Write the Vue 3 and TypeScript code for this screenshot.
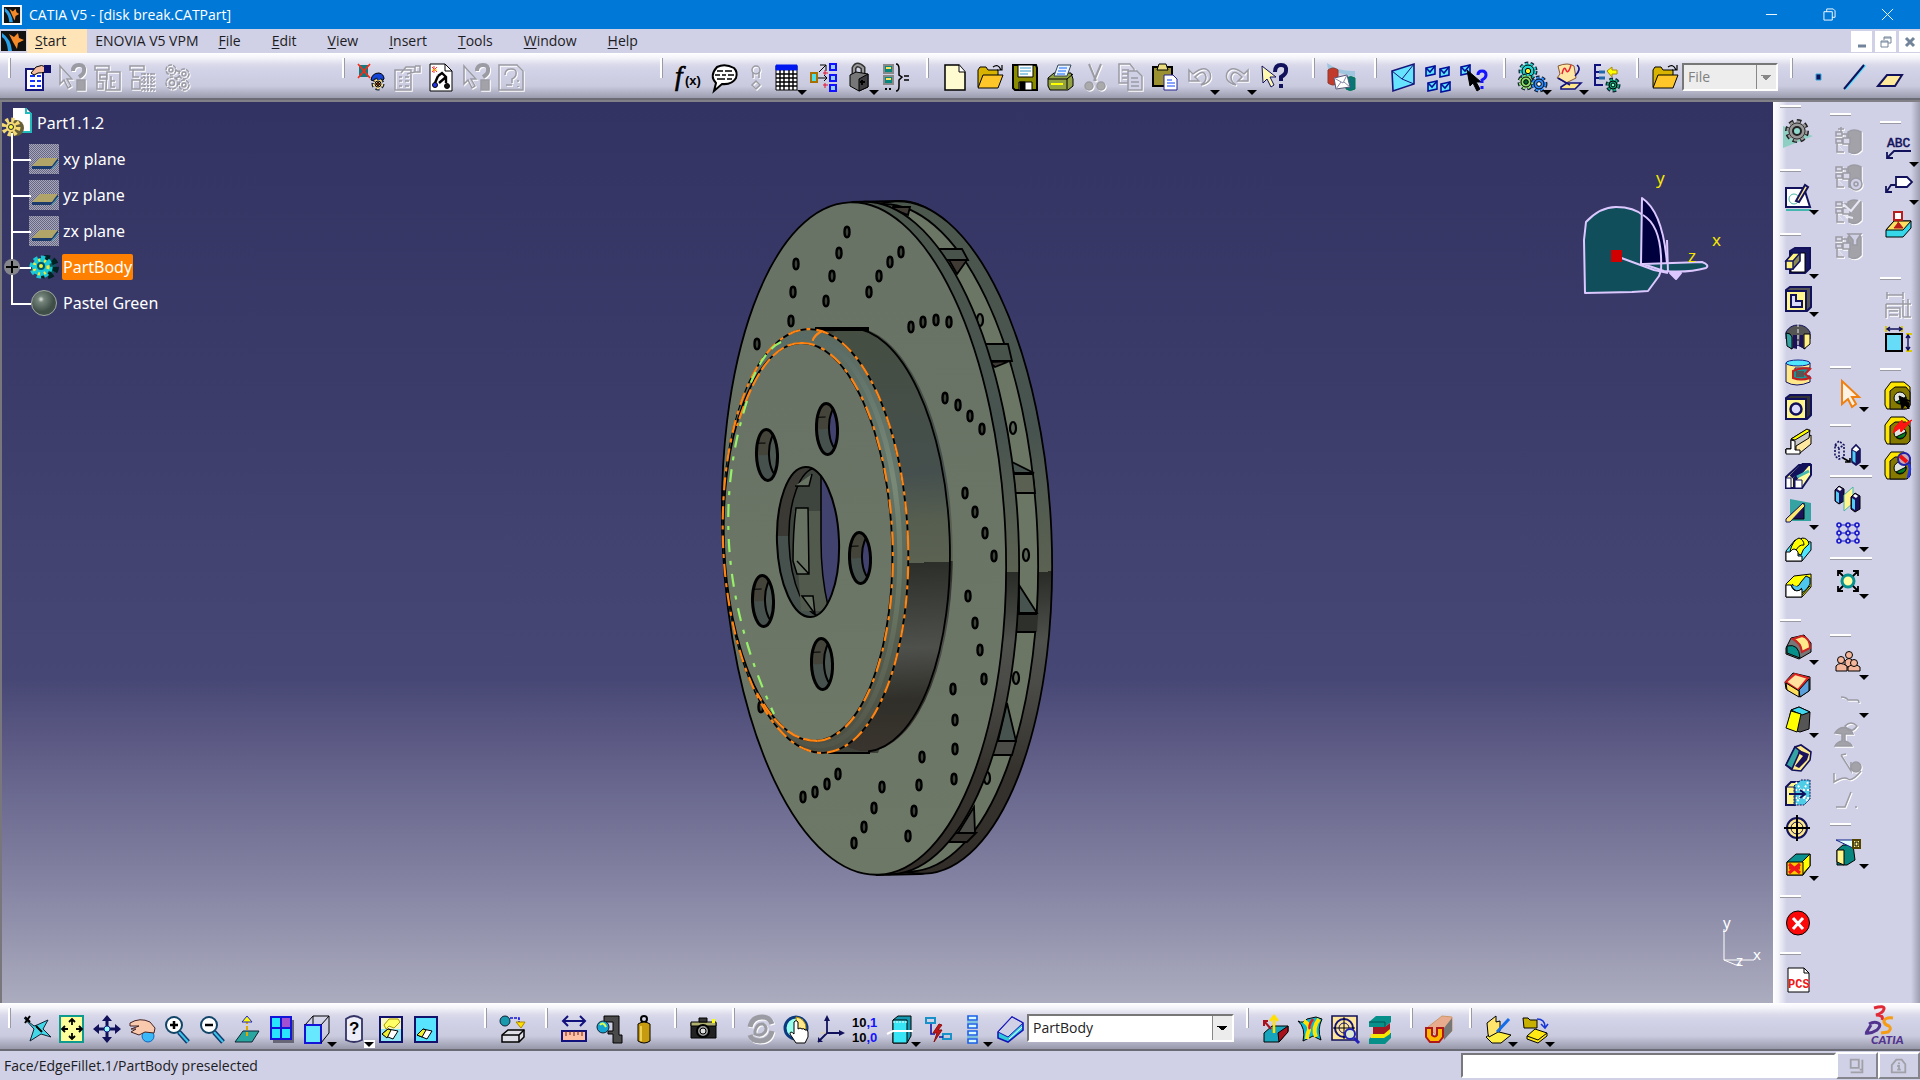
<script setup lang="ts">
interface Tool { icon: string; label: string; menu?: boolean; off?: boolean; narrow?: boolean; boxed?: boolean }
interface Group { size: number; tools: Tool[]; select?: string; rule?: boolean }

const t = (icon: string, label: string, flags = ''): Tool => ({
  icon, label,
  menu: flags.includes('m'), off: flags.includes('o'), narrow: flags.includes('n'), boxed: flags.includes('b'),
})

const gear = (cx: number, cy: number, r: number, fill: string, hub: string) =>
  `<circle cx="${cx}" cy="${cy}" r="${r}" fill="none" stroke="#123" stroke-width="5" stroke-dasharray="3 2"/><circle cx="${cx}" cy="${cy}" r="${r}" fill="${fill}" stroke="${fill}" stroke-width="2.5" stroke-dasharray="2.4 2.6"/><circle cx="${cx}" cy="${cy}" r="${r - 1}" fill="${fill}"/><circle cx="${cx}" cy="${cy}" r="${r / 2.6}" fill="${hub}"/>`
const folder = '<path d="M3 25V8l2-3h6l2 3h10v5" fill="#d8b400"/><path d="M3 26l5-13h20l-5 13z" fill="#ffc62a"/><path d="M18 5q5-4 8 3m-4 0h5V3" stroke-width="1.2"/>'
const nut = '<path d="M2 9l6-8h13l6 5v18l-5 4H4l-2-4z" fill="#ffe600"/><path d="M7 10l5-4h11l4 5v14l-3 3H7z" fill="#857900"/><circle cx="17" cy="17" r="6" fill="#dfe3df"/><path d="M13 21a6 6 0 0 0 10-5z" fill="#067a1f"/>'
const tree = '<path d="M15 6q6-4 13 0v18q-6 6-12 2V16h-1z" fill="#a2a2a8"/><path d="M3 6h6v4H3zM3 13h6v4H3zM10 12h7v6h-7zM4 17v9h7M9 8h5v4" fill="#d8d8ea"/>'
const mail = (x: number, y: number) => `<path d="M${x} ${y + 2}l9-2v8l-9 2z" fill="#5fe3ff" stroke="#00109a" stroke-width="1.6"/><path d="M${x} ${y + 2}l4 4 5-6" stroke="#00109a" stroke-width="1.6"/>`
const help = '<path d="M3 4l1 17 4-4 4 8 3-2-4-8h6z" fill="#fff9b0" stroke="#101060"/><path d="M16 10q0-7 6-7t5 6q0 3-5 6v4M22 22v4" stroke="#12125c" stroke-width="4"/>'
const offHelp = '<path d="M3 4v18l4-4 4 8 3-2-4-7h5z"/><path d="M16 9q0-6 6-6t5 6q0 3-5 6" stroke-width="4"/><path d="M20 18h8v10h-8z" fill="#a2a2a8"/>'
const card = '<rect x="4" y="7" width="17" height="21" fill="#fff" stroke="#14147a" stroke-width="2"/><path d="M8 14h5m2 0h4m-11 5h5m2 0h4m-11 5h5m2 0h4" stroke="#1535ff" stroke-width="2"/><path d="M9 11l5-6q6-3 10 0v5q-5 1-8 1l-4 2z" fill="#f7bda0"/><path d="M22 3h7v8h-7z" fill="#10106a" stroke="none"/>'
const offCard = '<path d="M4 8h16v20H4zM8 15h3m3 0h4m-10 4h3m3 0h4m-10 5h3m3 0h4M10 11l5-6h9v5l-8 2M24 4h5v6h-5"/>'

const icons: Record<string, string> = {
  card, offCard, offHelp, help, folder,
  offTree: '<path d="M3 4h14v4H3zM5 8v18M8 13h7v4H8zM5 20h6v7H5zM15 10h13v18H14zM19 14v11h4M19 19h4"/>',
  offGrid: '<path d="M3 4h14v4H3zM6 8v7h6M5 18h8v9H5z"/><path d="M14 12h15M14 16h15M14 20h15M14 24h15M14 28h15M17 11v17M21 11v17M25 11v17" stroke-dasharray="2 1"/>',
  offGears: '<g stroke-dasharray="4 1"><circle cx="9" cy="8" r="5"/><circle cx="22" cy="12" r="5"/><circle cx="10" cy="21" r="6"/><circle cx="22" cy="23" r="5"/></g><circle cx="9" cy="8" r="2"/><circle cx="22" cy="12" r="2"/><circle cx="10" cy="21" r="2.5"/><circle cx="22" cy="23" r="2"/><path d="M13 8l5 2M13 17l5-3M16 22h2"/>',
  worker: '<path d="M3 3h9v12H3z" fill="#157a80" stroke="none"/><path d="M2 2l12 14M14 2L2 16" stroke="#ff2a12" stroke-width="1.6"/><path d="M15 18q1-7 8-7 5 1 5 6l-5 4z" fill="#1544d8"/>' + gear(22, 22, 4, '#ffe08a', '#8a2a00'),
  graph: '<path d="M4 2h15l7 7v20H4z" fill="#fff"/><path d="M19 2v7h7" /><path d="M12 14l4-3 4 4v6M12 14l-3 7M20 15l-7 6" stroke-width="2.4"/><circle cx="9" cy="23" r="2.5" fill="#2536e8"/><circle cx="21" cy="24" r="2.5" fill="#111"/><path d="M6 5l5 5m0-5l-5 5M8 4v7" stroke="#f33"/><path d="M6 8h5" stroke="#fc0"/>',
  offPage: '<path d="M3 3h18l6 6v19H3zM9 13q0-6 6-6t5 5q0 3-4 5v4M10 23h6M22 18v2m0 4v1"/>',
  fx: '<text x="1" y="23" font-family="Liberation Serif" font-style="italic" font-size="27" fill="#000" stroke="#000" stroke-width=".7">f</text><text x="11" y="23" font-family="Liberation Sans" font-weight="bold" font-size="13" fill="#000" stroke="none">(x)</text>',
  bubble: '<path d="M8 5q8-4 17 1 4 4 2 10-4 7-14 6l-8 7 2-8q-7-7 1-16z" fill="#fff" stroke-width="2"/><path d="M8 9h6m2 0h7M6 13h5m2 0h4m2 0h6M8 17h8m2 0h5" stroke-width="1.6"/>',
  offLink: '<circle cx="15" cy="8" r="4"/><path d="M12 10v6m6-6v6m-3 3l4 4-4 4-4-4z"/>',
  table: '<path d="M4 4h21v24H4z" fill="#fff"/><path d="M4 3h21v5H4z" fill="#0018f0" stroke="#0018f0"/><path d="M4 12h21M4 16h21M4 20h21M4 24h21M8 8v20M12 8v20M17 8v20M21 8v20" stroke-width="1.4"/>',
  relate: '<path d="M2 11h6v9H2z" fill="#4de0e8" stroke="#a87000" stroke-width="2"/><path d="M10 10l7-7m-6 0h6v6M9 16h9m-3-3l3 3-3 3"/><path d="M21 2h6v6h-6zM21 13h6v6h-6zM21 23h6v6h-6z" fill="#9cf" stroke="#1212ff" stroke-width="2"/><path d="M16 8v5m-2-2h5M16 21v5m-2-3h5" stroke="#e01030"/>',
  lock: '<path d="M10 13V6q3-6 9 0v6" stroke="#333" stroke-width="5"/><path d="M10 13V6q3-6 9 0v6" stroke="#999" stroke-width="2"/><path d="M6 13l6-3 12 2v13l-9 4-9-5z" fill="#777"/><path d="M15 17l9-5v13l-9 4z" fill="#3c3c40"/><path d="M18 18v5m-2-3h5" stroke="#000" stroke-width="2"/>',
  equiv: '<path d="M3 3h9v8H3zM3 14h9v8H3z" fill="#07857f" stroke="#888" stroke-width="2"/><path d="M5 5h5v2H5zM5 16h5v2H5z" fill="#ffe45c" stroke="none"/><path d="M15 2q3 0 3 5v6l3 2-3 3v6q0 5-3 5M23 14h5m-5 4h5" stroke-width="1.5"/><path d="M4 27h2m2 0h2" stroke-width="2"/>',
  page: '<path d="M5 3h14l6 7v18H5z" fill="#fffbd0" stroke-width="1.5"/><path d="M19 3v7h6" fill="#fff"/>',
  save: '<path d="M3 3h23l1 3v22H5l-2-2z" fill="#8b8b00" stroke-width="2"/><path d="M8 3h15v12H8z" fill="#fff"/><path d="M10 6h11m-11 3h11m-11 3h8" stroke="#39c"/><path d="M9 20h13v8H9z" fill="#fff"/><path d="M10 20h5v8h-5z" fill="#000"/>',
  print: '<path d="M3 16l6-5h17l2 6v7l-5 4H5l-2-4z" fill="#93a344"/><path d="M3 17h19l6-5M22 17v10"/><path d="M9 14l4-11h13l-4 11z" fill="#e9f3ff" stroke="#345"/><path d="M14 6h8m-9 3h8m-9 3h8" stroke="#16f"/><path d="M6 22h12" stroke="#ff0" stroke-width="2"/>',
  cut: '<path d="M9 2l7 17M21 2l-7 17" stroke-width="2"/><circle cx="9" cy="24" r="4" fill="#aaa"/><circle cx="21" cy="24" r="4" fill="#aaa"/>',
  copy: '<path d="M4 2h11l4 5v14H4zM7 8h7m-7 4h7m-7 4h5"/><path d="M13 9h9l5 5v14H13zM16 16h7m-7 4h8m-8 4h8" fill="#d0d0e6"/>',
  paste: '<path d="M3 5h19v19H3z" fill="#9b9132" stroke-width="2"/><path d="M7 8l2-6h7l2 6z" fill="#e8dc7e"/><path d="M14 13h9l4 4v11H14z" fill="#fff" stroke="#22228f"/><path d="M17 18h5m-5 3h8m-8 3h8" stroke="#14f"/>',
  undo: '<path d="M4 8v11h10l-4-4q9-9 11 0 0 5-5 8 12-3 9-12-5-9-17 1z"/>',
  redo: '<path d="M26 8v11H16l4-4q-9-9-11 0 0 5 5 8-12-3-9-12 5-9 17 1z"/>',
  send: '<path d="M1 1q12 9 28 8v6L2 8z" fill="#9fc6de" stroke="none"/><path d="M2 8q5-4 10 0v13q-5 4-10 0z" fill="#c23a2c" stroke="#8a3a30"/><path d="M20 16q5-3 9 0v11q-5 3-9 0z" fill="#0b7477" stroke="#075"/><path d="M8 16l13-3 3 12-14 2z" fill="#fff" stroke="#557"/><path d="M8 16l9 5 4-8M10 27l5-7m9 5l-6-5" stroke="#88a"/>',
  mail: '<path d="M4 9L26 2v20L5 29z" fill="#66e4ff" stroke="#15157c" stroke-width="1.6"/><path d="M4 9l10 8L26 2M14 17l12 5" stroke="#15157c"/>',
  mails: mail(3, 4) + mail(17, 5) + mail(5, 19) + mail(18, 20),
  mailHelp: mail(3, 3) + '<path d="M9 8l3 16 3-3 4 8 3-2-4-7h5z" fill="#000"/><path d="M20 13q0-4 4-4t4 4q0 3-4 5v3M24 24v3" stroke="#1414ff" stroke-width="3"/>',
  gears: gear(11, 9, 7, '#20d5d0', '#ffef30') + gear(9, 20, 6, '#8fe070', '#063') + gear(22, 22, 6, '#2e8dff', '#fff'),
  scroll: '<path d="M4 4q10-4 16 0l2 12-10 5-9-5 3-4z" fill="#ffe6a4" stroke="#853"/><path d="M8 12q2-9 4-4t5-5" stroke="#e23" stroke-width="1.5"/><path d="M7 25l6-4h14l-6 6H7z" fill="#ffe88a" stroke="#12127c" stroke-width="1.6"/><path d="M4 16l12 7m7-20q5 4-2 11" stroke="#12127c" stroke-width="1.6"/>',
  treeGear: '<path d="M3 3h7M4 3v20h8M4 10h9M4 16h9" stroke="#12127c" stroke-width="2"/><path d="M8 10h6m-6 6h6" stroke="#26a" stroke-width="3"/><path d="M16 9l5-4v3h5v4h-5v3z" fill="#ff0" stroke="#a80"/>' + gear(22, 23, 5, '#11a078', '#8fc'),
  point: '<path d="M12 12h5v6h-5z" fill="#12125c" stroke="#3ad"/>',
  line: '<path d="M6 27L26 3" stroke="#57e0ff" stroke-width="3"/><path d="M5 27L25 3" stroke="#12125c" stroke-width="2"/>',
  plane: '<path d="M4 24l9-11h15l-7 11z" fill="#ffe99a" stroke="#12125c" stroke-width="2"/>',
  cog: '<path d="M0 8v22l30-12z" fill="#8fcfc3" stroke="none"/><circle cx="14" cy="13" r="9" stroke="#222" stroke-width="6" stroke-dasharray="4 3"/><circle cx="14" cy="13" r="9" fill="#999" stroke="#999" stroke-width="3" stroke-dasharray="3 4"/><circle cx="14" cy="13" r="8" fill="#999" stroke="#333"/><circle cx="14" cy="13" r="4" fill="#8fd8cc" stroke="#222" stroke-width="2"/>',
  sketch: '<path d="M3 6h18l6 19H3z" fill="#fff" stroke="#12125c" stroke-width="2"/><circle cx="11" cy="17" r="5" stroke="#4db7a5"/><path d="M13 19L22 3l3 2-9 15z" fill="#ffe98a" stroke="#12125c" stroke-width="2"/><path d="M3 28h25" stroke="#46b6b0" stroke-width="2"/>',
  pad: '<path d="M7 5l5-3h15v20l-5 5H7z" fill="#181862" stroke="#12125c" stroke-width="2"/><path d="M8 7h14v19H8z" fill="#fff"/><path d="M3 15l7-8h7v8l-7 8H3z" fill="#8a8a50" stroke="#12125c" stroke-width="1.6"/><path d="M3 15l7-8h7l-7 8zM3 15h7v8H3z" fill="#fff37d" stroke="#12125c" stroke-width="1.4"/>',
  pocket: '<path d="M3 6l4-3h21v20l-4 4H3z" fill="#555" stroke="#12125c" stroke-width="2"/><path d="M3 7h20v20H3z" fill="#fff68c" stroke="#12125c" stroke-width="2"/><path d="M8 11h5v6h6v6H8z" fill="#dadafa" stroke="#12125c" stroke-width="2"/>',
  shaft: '<path d="M3 10q4-7 12-7t12 7v7h-5v10l-7-4-7 4v-10H3z" fill="#555" stroke="#12125c"/><path d="M3 11q5 0 6 4v12l-5-3z" fill="#35a3a2"/><path d="M21 12h6v10l-6 5z" fill="#ffef87"/><path d="M10 13h4v14l-4-1zM17 13h3v13l-4-2z" fill="#1c125c" stroke="none"/><path d="M15 1v27" stroke="#eee" stroke-dasharray="4 2"/>',
  groove: '<path d="M3 6v19q10 6 24 0v-6H12v-8h15V6z" fill="#ffe88a" stroke="#12125c"/><ellipse cx="15" cy="6" rx="12" ry="3" fill="#4fe6ff" stroke="#128"/><path d="M27 12q-9-2-17 2v7q8 3 17 0l-5-4z" fill="#16989a" stroke="#c12020" stroke-width="2"/><path d="M13 14h8v6h-8z" fill="#555" stroke="none"/>',
  hole: '<path d="M3 6l4-3h21v20l-4 4H3z" fill="#333" stroke="#12125c" stroke-width="2"/><path d="M3 7h20v20H3z" fill="#fff68c" stroke="#12125c" stroke-width="2"/><circle cx="13" cy="17" r="5.5" fill="#dadafa" stroke="#12125c" stroke-width="2.5"/>',
  rib: '<path d="M3 26h14l11-9V8L12 17l-1 5H3z" fill="#ffe9a0"/><path d="M8 12L23 3h4l-1 8-13 8v7H3v-4h5z" fill="#c8c8c8"/><path d="M8 12L24 2l3 2-15 9z" fill="#ff0"/><path d="M3 22h5v-9l4 1v9h5v4H3z" fill="#fff"/>',
  slot: '<path d="M3 15L16 3h12v10L19 26H3z" fill="#fff9a0" stroke="#12125c" stroke-width="2"/><path d="M8 15L20 3h4L12 17v9" stroke="#12125c" stroke-width="4"/><path d="M14 15l12-6" stroke="#46b6b0" stroke-width="3"/><path d="M3 16h5v10H3zm9 2h7v8h-7z" fill="#fff" stroke="#12125c"/>',
  stiff: '<path d="M7 2l21 4v18H7z" fill="#35a3a2" stroke="none"/><path d="M3 22L21 6v16H9z" fill="#1c125c"/><path d="M3 22L20 6l2 3L7 25H3z" fill="#ffe96e" stroke="#12125c"/>',
  multi: '<path d="M3 16L12 5l16 2v8l-9 11H3z" fill="#4fe6ff"/><path d="M11 17q1-9 8-14 6 0 7 6-7 5-8 11z" fill="#ff0"/><path d="M7 16q3-11 9-13 5 2 5 7-6-1-9 8z" fill="#ff0"/><path d="M3 17h4q4-6 8 0v4h4v5H3z" fill="#fff"/>',
  removed: '<path d="M3 14l8-8 17-2v13l-9 10H3z" fill="#ff0"/><path d="M9 14q5 6 9-2l5-6 4 2v6q-5 10-14 10z" fill="#4fc6ee"/><path d="M18 26l9-10" stroke="#000"/><path d="M3 15h5q2 9 11 4v8H3z" fill="#fff"/><path d="M8 15q5 10 11 3" fill="#4fc6ee"/>',
  fillet: '<path d="M3 16L8 6 21 3l7 8v9l-12 7L3 22z" fill="#777"/><path d="M10 7l9-3q8 2 8 12l-8 4q-1-9-9-13z" fill="#ffe98a" stroke="#c22" stroke-width="2"/><path d="M4 14q12-3 13 12L4 21z" fill="#07908a"/>',
  chamfer: '<path d="M2 12l8-9 17 4v13l-10 7-14-8z" fill="#777"/><path d="M3 12l9-8 13 4-10 12z" fill="#ffe2a0" stroke="#d22" stroke-width="2"/><path d="M16 20l10-11v12l-9 6z" fill="#5ba0da"/><path d="M3 13l13 8v6L4 20z" fill="#ffe05c"/>',
  draft: '<path d="M8 5l8-3 11 5-1 17-9 3-13-4z" fill="#555"/><path d="M8 5l8-3 11 5-8 3z" fill="#42d6ee"/><path d="M8 6l10 3-4 18-11-4z" fill="#ff0"/>',
  shell: '<path d="M3 22L12 4l6-2 10 7-1 8-9 11-9-1z" fill="#ffe98a" stroke="#12125c" stroke-width="1.6"/><path d="M3 22L12 4l5 4-8 18z" fill="#35a3a2" stroke="#12125c" stroke-width="1.6"/><path d="M16 7l10 4-2 6-8 8-4-2 8-10-5-3z" fill="#1c125c" stroke="none"/>',
  thick: '<path d="M3 9l5-5h10v18l-6 5H3z" fill="#fff68c" stroke="#12125c" stroke-width="2"/><path d="M11 8l7-6h9v19l-6 6H11z" fill="#4fcde6" stroke="#12125c" stroke-dasharray="2 1"/><path d="M13 4l12 20M25 4L13 26M12 12h14M12 20h14" stroke="#fff" stroke-dasharray="2 2" stroke-width="2"/><path d="M3 9h9v18" stroke="#12125c"/><path d="M6 16h15m-4-4l5 4-5 4" stroke="#12125c" stroke-width="2"/>',
  target: '<circle cx="14" cy="15" r="10" fill="#ffe98a" stroke="#12125c" stroke-width="2"/><circle cx="14" cy="15" r="6" stroke="#12125c"/><path d="M14 2v26M1 15h26" stroke="#000" stroke-width="2"/>',
  remove: '<path d="M4 14L13 6h14v12l-7 9H4z" fill="#0b9090"/><path d="M19 14l8-8v12l-8 9z" fill="#ff0"/><path d="M4 14h16v13H4z" fill="#ffc800"/><path d="M6 16l11 9m0-9L6 25M6 20h11" stroke="#f01818" stroke-width="3"/>',
  stop: '<ellipse cx="15" cy="15" rx="11.5" ry="12" fill="#fb0808"/><path d="M10 10l10 11m0-11L10 21" stroke="#fff" stroke-width="3"/>',
  pcs: '<path d="M5 3h16l5 5v19H5z" fill="#fff"/><path d="M21 3v5h5"/><text x="5" y="23" font-family="Liberation Mono" font-size="12" font-weight="bold" fill="#f01818" stroke="none">PCS</text>',
  offA: tree + '<path d="M8 1v5M5 3h6"/>',
  offB: tree + '<circle cx="23" cy="23" r="6" fill="#d0d0e6"/><circle cx="23" cy="23" r="2"/>',
  offC: tree + '<path d="M10 8l8 7 9-11M12 20l8 2" stroke="#e8e8f4" stroke-width="2"/>',
  offD: tree + '<path d="M15 3h13l-4 6v5h-4V9z" fill="#d0d0e6"/>',
  cursor: '<path d="M9 2v23l6-5 4 8 4-3-4-7h7z" fill="#fff3e6" stroke="#f08010" stroke-width="2"/>',
  transform: '<path d="M2 8l4-4 5 4v12l-5 2-4-3zM2 8l4 3 5-3M6 11v10" stroke="#12125c" stroke-dasharray="2 1.5" stroke-width="1.6"/><path d="M10 21l7 4m-5 0h5v-4" stroke-width="1.6"/><path d="M19 12l4-4 4 4v13l-4 3-4-3z" fill="#fff" stroke="#12125c" stroke-width="1.6"/><path d="M19 13l4 2v12l-4-3z" fill="#4fcdf6" stroke="#12125c"/><path d="M23 15l4-3v13l-4 3z" fill="#1c125c" stroke="none"/>',
  mirror: '<path d="M2 6l4-4 5 3v12l-5 3-4-3z" fill="#1c125c"/><path d="M3 7l3 2v10l-3-2z" fill="#4fcdf6" stroke="none"/><path d="M4 5l2-2 3 2-2 2z" fill="#fff" stroke="none"/><path d="M11 11l9-8v16l-9 8z" fill="#fff58c" stroke="#46b6b0"/><path d="M18 13l4-4 5 3v13l-5 3-4-3z" fill="#1c125c"/><path d="M19 14l3 2v10l-3-2z" fill="#4fcdf6" stroke="none"/><path d="M20 12l2-2 3 2-2 2z" fill="#fff" stroke="none"/>',
  grid: '<path d="M6 6h18M6 14h18M6 22h18M6 6v16M15 6v16M24 6v16" stroke="#1616c8"/><g fill="#d0d0e6" stroke="#1616c8" stroke-width="1.6"><circle cx="6" cy="6" r="2"/><circle cx="15" cy="6" r="2"/><circle cx="24" cy="6" r="2"/><circle cx="6" cy="14" r="2"/><circle cx="15" cy="14" r="2"/><circle cx="24" cy="14" r="2"/><circle cx="6" cy="22" r="2"/><circle cx="15" cy="22" r="2"/><circle cx="24" cy="22" r="2"/></g>',
  scale: '<circle cx="15" cy="15" r="6" fill="#ffffa0" stroke="#079090" stroke-width="3"/><path d="M10 10L5 5m0 5V5h5M20 10l5-5m-5 0h5v5M10 20l-5 5m0-5v5h5M20 20l5 5m-5 0h5v-5" stroke-width="1.8"/>',
  people: '<g fill="#f5b79b"><path d="M12 20v-6q4-5 8 0v6z"/><circle cx="16" cy="8" r="3.5"/><path d="M3 24v-5q4-5 11 0v5z"/><circle cx="8" cy="13" r="3.5"/><path d="M15 24v-4q6-5 12 0v4z"/><circle cx="21" cy="16" r="3.5"/></g>',
  curve: '<path d="M8 12q5 0 7 3h9q2 0 2 3"/>',
  umbrella: '<path d="M2 12q6-9 16-3l2 4h-8v7q6 2 7 5H2q2-4 7-5v-7z" fill="#a2a2a8"/><path d="M12 5q6-6 12 0-4 6-9 4z"/>',
  sweep: '<path d="M8 2l10 16V9M8 2l5-1M1 20v9q10-6 14-3t13-8"/><circle cx="23" cy="14" r="5" fill="#a2a2a8"/>',
  angle: '<path d="M18 7l-6 15H3m19 0h2"/>',
  cube: '<path d="M4 14l6-5h10l2 15-8 5H4z" fill="#07857f"/><path d="M4 14h7v15l-7-3z" fill="#fff68c"/><path d="M3 4h18l-1 8z" fill="#e4ffff" stroke="#128"/><path d="M20 4h7v8h-7z" fill="#fff68c" stroke="#554400" stroke-width="2"/><path d="M22 6h3v4h-3z" stroke="#000"/>',
  abc: '<text x="4" y="13" font-family="Liberation Mono" font-size="13" fill="#12125c" stroke="#12125c" stroke-width=".5">ABC</text><path d="M28 17H11l-6 6m-1-5v6h6" stroke="#12125c" stroke-width="1.8"/>',
  flag: '<path d="M13 5h11l5 5-5 5H13z" fill="#fff" stroke="#12125c" stroke-width="1.8"/><path d="M13 13H8l-4 6m-1-5v6h6" stroke="#12125c" stroke-width="1.8"/>',
  datum: '<path d="M3 20l8-9h17v7l-8 9H3z" fill="#35d7e8"/><path d="M3 20l8-9h17l-8 9z" fill="#ffdf60"/><path d="M11 2h8v8h-8z" fill="#fff" stroke="#b81c1c" stroke-width="2"/><path d="M15 10v3l-4 5h9l-4-5" fill="#b81c1c" stroke="#b81c1c"/>',
  offDim: '<path d="M4 2v7M20 2v7M4 5h16M3 14h25M3 14v14M3 18h14v10M6 21h9M6 25h9M25 9v18M20 10v17M20 27h8"/>',
  dim: '<path d="M3 9h16v17H3z" fill="#66dcf8" stroke-width="2"/><path d="M3 1v6M19 1v6M23 9h6M23 26h6" stroke="#dbc800" stroke-width="2"/><path d="M4 4h15m-12-2L4 4l3 2m9-4l3 2-3 2M25 10v15m-2-12l2-3 2 3m-4 9l2 3 2-3" stroke="#12125c" stroke-width="1.4"/>',
  nutA: nut + '<path d="M16 15l3 13 3-4 4 4v-6l-3-2h4z" fill="#000"/>',
  nutB: nut + '<path d="M12 11l7-7 1 4 9-4-11 12-1-4-7 5z" fill="#ff1414" stroke="#f11"/>',
  nutC: nut + '<circle cx="21" cy="8" r="6" fill="#c8a8b8" stroke="#2222a8" stroke-width="2"/><path d="M17 5l7 6" stroke="#e11" stroke-width="4"/><path d="M26 13l1 5-2 9" stroke="#2233ee" stroke-width="2.5"/>',
  fly: '<path d="M2 4l10 8 3-1 11-5-5 9 8 8-10-3-11 7 4-12z" fill="#43d8e8" stroke="#123"/><path d="M3 3l5 5M8 2L3 9M14 12l6 6" stroke-width="2"/>',
  fit: '<path d="M3 2h23v26H3z" fill="#ffff9c" stroke="#0f9a90" stroke-width="2"/><path d="M15 11V5m-3 3l3-3 3 3M15 19v6m-3-3l3 3 3-3M11 15H5m3-3l-3 3 3 3M19 15h6m-3-3l3 3-3 3" stroke-width="1.8"/>',
  pan: '<path d="M15 3v24M3 15h24" stroke="#12125c" stroke-width="3"/><path d="M10 7l5-6 5 6zM10 23l5 6 5-6zM7 10l-6 5 6 5zM23 10l6 5-6 5z" fill="#12125c" stroke="none"/><circle cx="15" cy="15" r="3" fill="#9ff" stroke="#128"/>',
  rotate: '<circle cx="21" cy="22" r="6" fill="#39b9f8" stroke="#16b"/><path d="M3 9q10-6 20-1l5 6-1 5-9-1-6 3-8-3 5-3H4l8-3H3z" fill="#f9c9ae" stroke="#422"/>',
  zoomIn: '<path d="M17 18l9 10" stroke="#123a70" stroke-width="5"/><path d="M17 18l9 10" stroke="#3cc4e8" stroke-width="2"/><circle cx="12" cy="11" r="8" fill="#fff" stroke="#146" stroke-width="2"/><path d="M8 11h8m-4-4v8" stroke-width="2.5"/>',
  zoomOut: '<path d="M17 18l9 10" stroke="#123a70" stroke-width="5"/><path d="M17 18l9 10" stroke="#3cc4e8" stroke-width="2"/><circle cx="12" cy="11" r="8" fill="#fff" stroke="#146" stroke-width="2"/><path d="M8 11h8" stroke-width="2.5"/>',
  normal: '<path d="M3 28l8-11h16l-7 11z" fill="#2aa6a0" stroke="#123"/><path d="M15 22V6" stroke="#e0a800" stroke-width="2" stroke-dasharray="4 2"/><path d="M10 8l5-6 5 6z" fill="#ff0" stroke="#22c"/>',
  quad: '<path d="M6 6h21v23H6z" fill="#667" stroke="none"/><path d="M4 3h20v22H4z" fill="#28e4ff" stroke="#1414d8" stroke-width="2"/><path d="M14 3v22M4 14h20" stroke="#1414d8" stroke-width="2"/><path d="M15 4h8v9h-8z" fill="#a050d0" stroke="none"/>',
  iso: '<path d="M3 11h16v18H3z" fill="#68e8ff" stroke="#1414d8" stroke-width="2"/><path d="M3 11L11 2h16v17l-8 10M19 11l8-9M11 2v8"/>',
  hidden: '<path d="M7 5q8-6 16 0v21q-8 4-16 0z" fill="#eeeef8" stroke="#336" stroke-width="1.8"/><text x="10" y="20" font-family="Liberation Sans" font-size="17" font-weight="bold" fill="#000" stroke="none">?</text>',
  swapA: '<path d="M4 3h22v25H4z" fill="#f6f6c0" stroke="#12126c" stroke-width="2"/><path d="M5 15h20v12H5z" fill="#8fe6f4" stroke="none"/><path d="M8 11l5-6h9l2 3-6 6-5-2-3 3z" fill="#ff6" stroke="#a90"/><path d="M6 20l6-5 10 2-5 8-5-2z" fill="#fff"/><path d="M6 20l6-5 3 1-4 8z" fill="#ee3"/>',
  swapB: '<path d="M4 3h22v25H4z" fill="#58e3ff" stroke="#12126c" stroke-width="2"/><path d="M6 21l6-6 9 2-5 8-5-2z" fill="#fff"/><path d="M6 21l6-6 3 1-4 7z" fill="#ee3"/>',
  place: '<circle cx="7" cy="7" r="5" fill="#1899ad" stroke="#123"/><path d="M12 4h9v7" stroke="#1414d8" stroke-width="1.6" stroke-dasharray="3 1"/><path d="M18 8h9l-4 6z" fill="#ffe000" stroke="#a80"/><path d="M4 21l6-5h16v7l-5 5H4z" fill="#dedee6" stroke-width="1.5"/><path d="M4 21h17v7m0-7l5-5" stroke-width="1.5"/>',
  measure: '<path d="M4 7h22M9 2L4 7l5 5M21 2l5 5-5 5" stroke="#12127c" stroke-width="2"/><path d="M3 17h24v10H3z" fill="#ffc0a4" stroke="#12127c" stroke-width="2"/><path d="M7 17v5m4-5v4m4-4v5m4-5v4m4-4v5" stroke="#622"/>',
  caliper: '<path d="M10 2h15v19h3v8h-9v-9h-5v-3h5V8h-9z" fill="#4a4a4a"/><circle cx="9" cy="13" r="6" fill="#16a5d0" stroke="#123"/><path d="M6 11q3-4 6 2" stroke="#df5" stroke-width="2"/>',
  weight: '<circle cx="15" cy="5" r="3" stroke-width="2"/><path d="M9 10q6-4 12 0v17q-6 4-12 0z" fill="#c79b10"/><path d="M12 12v15" stroke="#efcf50" stroke-width="2"/>',
  camera: '<path d="M3 9h25v15H3z" fill="#222"/><path d="M3 8h25v4H3z" fill="#b0b070"/><path d="M11 4h8v4h-8z" fill="#333"/><path d="M24 5h3v4h-3z" fill="#ff0" stroke="none"/><circle cx="15" cy="17" r="6" fill="#999" stroke="#000" stroke-width="2"/><circle cx="15" cy="17" r="3" fill="#ddd"/>',
  update: '<path d="M4 13Q6 3 16 3q8 0 10 7M26 17q-2 10-12 10-8 0-10-6" stroke-width="5"/><path d="M9 17q2-8 8-7 5 3 2 8-4 5-10 2z" stroke-width="3"/>',
  manual: '<circle cx="15" cy="14" r="11" fill="#9fe" stroke="#0b3a80" stroke-width="3"/><path d="M15 3a11 11 0 0 1 10 12h-9z" fill="#ffe98a" stroke="#a80"/><path d="M13 8q2-3 4 0v7q2-2 4 0 2-1 3 1 3-1 3 2v5l-3 6h-9l-6-9q0-4 4 0z" fill="#fff"/>',
  axes: '<path d="M11 19V4M11 19h15M11 19l-9 9" stroke="#12125c" stroke-width="1.8"/><path d="M8 7l3-6 3 6zM23 16l6 3-6 3zM2 23v5h5z" fill="#12125c" stroke="none"/><path d="M4 19h6" stroke="#dc9"/>',
  tolerance: '<g font-family="Liberation Sans" font-size="13" font-weight="bold" stroke="none"><text x="1" y="13" fill="#000">10<tspan fill="#1414ff">,1</tspan></text><text x="1" y="28" fill="#000">10<tspan fill="#1414ff">,0</tspan></text></g>',
  section: '<path d="M7 6l5-4h13v20l-4 7H7z" fill="#1498b0"/><path d="M7 6h14v23H7z" fill="#38e5f4"/><path d="M1 20l6-3h20" stroke="#fff" stroke-width="2"/><path d="M7 8h14" stroke="#fff" stroke-dasharray="2 1"/>',
  cutLink: '<path d="M3 4h9v5H3zM20 20h8v5h-8z" stroke="#1890c8" stroke-width="2"/><path d="M8 10v10h4m4 3h4" stroke="#1414a8" stroke-width="1.6"/><path d="M16 10l-6 9h4l-3 9 8-12h-4l4-5z" fill="#c31418" stroke="#811"/>',
  stack: '<path d="M10 2h9v4h-9zM10 10h9v4h-9zM10 17h9v4h-9zM10 25h9v4h-9z" fill="#d8f8ff" stroke="#1a60e8" stroke-width="1.6"/><path d="M9 8h11M9 23h11" stroke="#2ab8d8"/>',
  body: '<path d="M3 18L17 3l11 6v7L13 28 3 24z" fill="#30cbd8" stroke="#1414b8" stroke-width="1.6"/><path d="M3 18L17 3l11 6-15 14z" fill="#d0d0e6" stroke="#1414b8"/><path d="M14 25l13-12" stroke="#fff"/>',
  draftA: '<path d="M4 19l8-7h16v5l-9 11H4z" fill="#16a5bd"/><path d="M18 19l10-7v6l-9 10z" fill="#a8101c"/><path d="M14 19V3m-4 4l4-5 4 5" stroke="#ffe000" stroke-width="2.5"/><path d="M11 15L4 7m0 5V7h4" stroke="#a8101c" stroke-width="2"/>',
  surface: '<path d="M3 7q5 3 9-2l9-2 6 2q-5 10-1 21l-8-4-10 5q3-13-5-20z" fill="#08b8d4"/><path d="M9 7q6 4 5 9-2 4-2 9M24 5q-7 9-3 18" stroke="#ffe500" stroke-width="4"/><path d="M18 5q-5 7-3 10" stroke="#ef1818" stroke-width="2.5"/>',
  inspect: '<path d="M2 2h25v24H2z" fill="#ffe69a" stroke="#12125c" stroke-width="1.6"/><circle cx="14" cy="14" r="9" stroke="#12127c" stroke-width="2"/><circle cx="14" cy="14" r="5" stroke="#12127c"/><path d="M14 3v22M3 14h22"/><circle cx="20" cy="20" r="5" fill="#dde8d0" stroke="#22b" stroke-width="2"/><path d="M24 24l5 5" stroke="#22b" stroke-width="3"/>',
  layers: '<path d="M4 8l7-6h15v6l-6 5H4zM4 25l7-6h15v5l-6 6H4z" fill="#07908a" stroke="none"/><path d="M8 13h12l5-4v7l-5 5H8z" fill="#a01822" stroke="none"/><path d="M6 20h13l6-5v5l-6 4H6z" fill="#f4e800" stroke="none"/><path d="M4 8h16v5" stroke="#055"/>',
  profile: '<path d="M4 13L18 2l10 1v14L17 26z" fill="#e8ab8d" stroke="#c96"/><path d="M20 14l8-10v13l-8 9z" fill="#777" stroke="none"/><path d="M2 14h6v7q3 3 5 0v-7h6v9l-4 5H6l-4-5z" fill="#ffb900" stroke="#b01818" stroke-width="2"/>',
  catalogA: '<path d="M3 23l9-6 16 4-10 8H9z" fill="#ffee42"/><path d="M5 20L4 9l9-7v6l4-1v10L6 23z" fill="#ffe56b"/><path d="M14 18L26 5" stroke="#146ce8" stroke-width="3"/>',
  catalogB: '<path d="M3 4h5l2 2h7v8H4z" fill="#c8b000"/><path d="M17 5q8 0 8 8m-4-3l4 4 3-4" stroke="#1636d8" stroke-width="1.6"/><path d="M7 22l8-7 12 4v3l-9 7-11-4z" fill="#ffe814"/><path d="M7 22l11 4 9-7" />',
}

const topBar: Group[] = [
  { size: 334, tools: [t('card', 'Properties'), t('offHelp', 'Query', 'o'), t('offTree', 'Structure', 'o'), t('offGrid', 'Table', 'o'), t('offGears', 'Assemblies', 'o')] },
  { size: 318, tools: [t('worker', 'Check'), t('offCard', 'Sheet', 'o'), t('graph', 'Graph'), t('offHelp', 'Query', 'o'), t('offPage', 'Report', 'o')] },
  { size: 266, tools: [t('fx', 'Formula'), t('bubble', 'Comment'), t('offLink', 'Link', 'on'), t('table', 'Design table', 'm'), t('relate', 'Relations'), t('lock', 'Lock', 'm'), t('equiv', 'Equivalent dimensions')] },
  { size: 386, tools: [t('page', 'New'), t('folder', 'Open'), t('save', 'Save'), t('print', 'Print'), t('cut', 'Cut', 'o'), t('copy', 'Copy', 'o'), t('paste', 'Paste'), t('undo', 'Undo', 'om'), t('redo', 'Redo', 'om'), t('help', "What's this")] },
  { size: 62, tools: [t('send', 'Send')] },
  { size: 129, tools: [t('mail', 'Mail'), t('mails', 'Mail all'), t('mailHelp', 'Mail help')] },
  { size: 133, tools: [t('gears', 'Products', 'm'), t('scroll', 'Catalog', 'm'), t('treeGear', 'Tree')] },
  { size: 154, tools: [t('folder', 'Browse')], select: 'File' },
  { size: 120, tools: [t('point', 'Point'), t('line', 'Line'), t('plane', 'Plane')] },
]
const bottomBar: Group[] = [
  { size: 476, tools: [t('fly', 'Fly mode'), t('fit', 'Fit all in'), t('pan', 'Pan'), t('rotate', 'Rotate'), t('zoomIn', 'Zoom in'), t('zoomOut', 'Zoom out'), t('normal', 'Normal view'), t('quad', 'Multi-view'), t('iso', 'Isometric view', 'm'), t('hidden', 'View mode', 'mb'), t('swapA', 'Hide/Show'), t('swapB', 'Swap visible space')] },
  { size: 61, tools: [t('place', 'Manipulate')] },
  { size: 129, tools: [t('measure', 'Measure between'), t('caliper', 'Measure item'), t('weight', 'Measure inertia')] },
  { size: 58, tools: [t('camera', 'Capture')] },
  { size: 514, tools: [t('update', 'Update all', 'o'), t('manual', 'Manual update'), t('axes', 'Axis system'), t('tolerance', 'Mean dimensions'), t('section', 'Section', 'm'), t('cutLink', 'Isolate'), t('stack', 'Order', 'm'), t('body', 'Body')], select: 'PartBody' },
  { size: 164, tools: [t('draftA', 'Draft analysis'), t('surface', 'Curvature analysis'), t('inspect', 'Tap-thread analysis'), t('layers', 'Wall thickness')] },
  { size: 59, tools: [t('profile', 'Profile')] },
  { size: 120, tools: [t('catalogA', 'Catalog editor', 'm'), t('catalogB', 'Catalog browser', 'm')] },
]
const sideBars: Group[][] = [
  [
    { size: 64, tools: [t('cog', 'Part Design')] },
    { size: 64, tools: [t('sketch', 'Sketch', 'm')] },
    { size: 386, tools: [t('pad', 'Pad', 'm'), t('pocket', 'Pocket', 'm'), t('shaft', 'Shaft'), t('groove', 'Groove'), t('hole', 'Hole'), t('rib', 'Rib'), t('slot', 'Slot'), t('stiff', 'Stiffener', 'm'), t('multi', 'Multi-sections solid'), t('removed', 'Removed multi-sections')] },
    { size: 276, tools: [t('fillet', 'Edge fillet', 'm'), t('chamfer', 'Chamfer'), t('draft', 'Draft angle', 'm'), t('shell', 'Shell'), t('thick', 'Thickness'), t('target', 'Thread'), t('remove', 'Remove face', 'm')] },
    { size: 57, tools: [t('stop', 'Stop')] },
    { size: 50, tools: [t('pcs', 'PCS')] },
  ],
  [
    { size: 253, tools: [t('offA', 'Create scene', 'o'), t('offB', 'Refresh scene', 'o'), t('offC', 'Check scene', 'o'), t('offD', 'Filter scene', 'o')] },
    { size: 58, tools: [t('cursor', 'Select', 'm')] },
    { size: 51, tools: [t('transform', 'Translation', 'm')] },
    { size: 82, rule: true, tools: [t('mirror', 'Mirror'), t('grid', 'Rectangular pattern', 'm')] },
    { size: 77, rule: true, tools: [t('scale', 'Scaling', 'm')] },
    { size: 189, tools: [t('people', 'Instances', 'm'), t('curve', 'Curve', 'om'), t('umbrella', 'Shade', 'on'), t('sweep', 'Sweep', 'on'), t('angle', 'Angle', 'on')] },
    { size: 50, tools: [t('cube', 'Boolean', 'm')] },
  ],
  [
    { size: 156, tools: [t('abc', 'Text with leader', 'm'), t('flag', 'Flag note', 'm'), t('datum', 'Datum')] },
    { size: 91, tools: [t('offDim', 'Constraint dialog', 'o'), t('dim', 'Constraint')] },
    { size: 120, tools: [t('nutA', 'Apply material'), t('nutB', 'Quick render'), t('nutC', 'Inspect material')] },
  ],
]

const menus = ['Start', 'ENOVIA V5 VPM', 'File', 'Edit', 'View', 'Insert', 'Tools', 'Window', 'Help']
const nodes = [
  { label: 'xy plane', kind: 'plane' }, { label: 'yz plane', kind: 'plane' }, { label: 'zx plane', kind: 'plane' },
  { label: 'PartBody', kind: 'body' }, { label: 'Pastel Green', kind: 'ball' },
]
const drills: [number, number][] = [
  [847, 231], [839, 252], [832, 275], [826, 300], [796, 263], [793, 291], [791, 320], [757, 343], [901, 251], [890, 261], [879, 275], [869, 291],
  [911, 326], [923, 321], [936, 319], [949, 321], [945, 397], [958, 404], [970, 415], [982, 428], [965, 492], [975, 511], [985, 532], [994, 555],
  [968, 595], [975, 622], [980, 649], [984, 678], [953, 688], [955, 719], [955, 748], [954, 778], [922, 756], [919, 784], [914, 810], [908, 835],
  [882, 786], [874, 807], [864, 826], [854, 842], [838, 773], [827, 783], [815, 791], [803, 796], [761, 706],
]
const rimDrills: [number, number][] = [[980, 319], [1013, 427], [1026, 554], [1016, 677], [987, 777]]
const bolts = [
  { x: 827, y: 428, open: true }, { x: 767, y: 454, open: false }, { x: 860, y: 557, open: true },
  { x: 763, y: 600, open: false }, { x: 822, y: 663, open: false },
]
</script>

<template>
  <div class="app">
    <header class="title">
      <svg class="logo small" viewBox="0 0 20 20"><path d="M0 0h20v20H0z" fill="#111" stroke="#fff" stroke-width="2" /><path d="M2 2q8 6 9 16H7Q6 9 2 6z" fill="#2aa0e8" /><path d="M7 3l4 3 3-3 1 4 3 2-4 2-1 5-3-6z" fill="#f58a2a" /></svg>
      <h1>CATIA V5 - [disk break.CATPart]</h1>
      <button aria-label="Minimize"><svg viewBox="0 0 14 14"><path d="M1 7h12" /></svg></button>
      <button aria-label="Restore"><svg viewBox="0 0 14 14"><path d="M1 4h9v9H1zM4 4V1h7l2 2v7h-3" /></svg></button>
      <button aria-label="Close"><svg viewBox="0 0 14 14"><path d="M1 1l12 12M13 1L1 13" /></svg></button>
    </header>

    <nav class="menu">
      <svg class="logo" viewBox="0 0 25 20"><path d="M0 0h25v20H0z" fill="#111" /><path d="M1 2q9 6 10 18H7Q6 9 1 6z" fill="#2aa0e8" /><path d="M8 3l5 3 4-4 1 5 5 2-6 3-1 6-4-7z" fill="#f58a2a" /></svg>
      <button v-for="(m, i) in menus" :key="m" :class="{ hot: i === 0, wide: i === 1 }"><u v-if="i !== 1">{{ m[0] }}</u>{{ i === 1 ? m : m.slice(1) }}</button>
      <span class="mdi">
        <button aria-label="Minimize document"><svg viewBox="0 0 14 14"><path d="M3 11h8" stroke-width="3" /></svg></button>
        <button aria-label="Restore document"><svg viewBox="0 0 14 14"><path d="M2 6h7v6H2zM2 7h7M5 5V2h7v6H9M5 3h7" /></svg></button>
        <button aria-label="Close document"><svg viewBox="0 0 14 14"><path d="M3 3l8 8M11 3l-8 8" stroke-width="3" /></svg></button>
      </span>
    </nav>

    <div class="bar" role="toolbar">
      <div v-for="(g, i) in topBar" :key="i" class="group" :style="{ width: g.size + 'px' }">
        <button v-for="(tool, k) in g.tools" :key="k" class="tool" :class="{ off: tool.off, narrow: tool.narrow, arrow: tool.menu }" :aria-label="tool.label">
          <svg viewBox="0 0 30 30"><g class="art" v-html="icons[tool.icon]" /><path v-if="tool.menu" class="drop" d="M25 28h10l-5 5z" /></svg>
        </button>
        <select v-if="g.select" class="box dim" aria-label="Source" disabled><option>{{ g.select }}</option></select>
      </div>
    </div>

    <div class="middle">
      <main class="view">
        <div class="tree">
          <div class="root">
            <svg viewBox="0 0 30 30"><path d="M11 0h13l5 5v18H11z" fill="#fff" /><path d="M24 0v5h5M12 24h17V5" fill="none" stroke="#2bb" stroke-width="2" /><circle cx="14" cy="20" r="8" fill="#665f38" /><circle cx="9" cy="19" r="7" fill="none" stroke="#f5da74" stroke-width="5" stroke-dasharray="3 2.5" /><circle cx="9" cy="19" r="5" fill="#f5da74" /><circle cx="9" cy="19" r="2.5" fill="#ff3" stroke="#224" /></svg>
            <span>Part1.1.2</span>
          </div>
          <ul>
            <li v-for="n in nodes" :key="n.label" :class="n.kind">
              <button v-if="n.kind === 'body'" class="plus" aria-label="Expand"><svg viewBox="0 0 16 16"><path d="M8 2v12M2 8h12" stroke="#000" stroke-width="2" /></svg></button>
              <svg viewBox="0 0 30 30">
                <template v-if="n.kind === 'plane'">
                  <defs><pattern id="mesh" width="2" height="2" patternUnits="userSpaceOnUse"><path d="M0 0h2v2H0z" fill="#66668a" /><path d="M0 0h1v1H0zM1 1h1v1H1z" fill="#a8a8b4" /></pattern></defs>
                  <path d="M0 0h30v30H0z" fill="url(#mesh)" /><path d="M3 22l8-8h18l-6 8z" fill="#b0a468" /><path d="M3 22h20l6-8v3l-7 8H3z" fill="#1d3a6c" /><path d="M23 25l6-8" fill="none" stroke="#3a9aaa" />
                </template>
                <g v-else-if="n.kind === 'body'">
                  <circle cx="18" cy="15" r="9" fill="#0b5a60" stroke="#022" stroke-width="6" stroke-dasharray="5 3" />
                  <circle cx="12" cy="15" r="9" fill="#19c8d6" stroke="#19c8d6" stroke-width="5" stroke-dasharray="4 3" />
                  <circle cx="12" cy="15" r="7" fill="#19c8d6" stroke="#f3e93a" stroke-width="3" stroke-dasharray="2 4" /><circle cx="12" cy="14" r="3" fill="#f3f33a" stroke="#056" stroke-width="2" />
                </g>
                <g v-else>
                  <defs><radialGradient id="ball" cx=".38" cy=".35"><stop offset="0" stop-color="#dfe6df" /><stop offset=".25" stop-color="#75857c" /><stop offset="1" stop-color="#3f4f48" /></radialGradient></defs>
                  <circle cx="15" cy="15" r="12.5" fill="url(#ball)" stroke="#a0a8a0" />
                </g>
              </svg>
              <span>{{ n.label }}</span>
            </li>
          </ul>
        </div>

        <svg class="part" viewBox="698 182 380 740" aria-label="Brake disc">
          <defs>
            <linearGradient id="rim" gradientUnits="userSpaceOnUse" x1="0" y1="200" x2="0" y2="876">
              <stop offset="0" stop-color="#4c574d" /><stop offset=".35" stop-color="#47534f" /><stop offset=".43" stop-color="#515a50" /><stop offset=".557" stop-color="#5b6252" />
              <stop offset=".557" stop-color="#292b26" /><stop offset=".66" stop-color="#4e514c" /><stop offset=".72" stop-color="#4b4b47" /><stop offset=".85" stop-color="#35322d" /><stop offset="1" stop-color="#322d28" />
            </linearGradient>
            <linearGradient id="rimBack" gradientUnits="userSpaceOnUse" x1="0" y1="-336" x2="0" y2="339">
              <stop offset="0" stop-color="#4c574d" /><stop offset=".35" stop-color="#47534f" /><stop offset=".43" stop-color="#515a50" /><stop offset=".557" stop-color="#5b6252" />
              <stop offset=".557" stop-color="#292b26" /><stop offset=".66" stop-color="#4e514c" /><stop offset=".72" stop-color="#4b4b47" /><stop offset=".85" stop-color="#35322d" /><stop offset="1" stop-color="#322d28" />
            </linearGradient>
            <linearGradient id="drum" gradientUnits="userSpaceOnUse" x1="0" y1="-212" x2="0" y2="212">
              <stop offset="0" stop-color="#454e41" /><stop offset=".35" stop-color="#454f4d" /><stop offset=".46" stop-color="#565e50" /><stop offset=".56" stop-color="#5b6252" />
              <stop offset=".56" stop-color="#2c2e29" /><stop offset=".76" stop-color="#4e504c" /><stop offset=".88" stop-color="#302f29" /><stop offset="1" stop-color="#3a342e" />
            </linearGradient>
            <linearGradient id="round" gradientUnits="userSpaceOnUse" x1="0" y1="-212" x2="0" y2="212">
              <stop offset="0" stop-color="#5b6b62" /><stop offset=".35" stop-color="#647569" /><stop offset=".6" stop-color="#5b6656" /><stop offset="1" stop-color="#4c4f43" />
            </linearGradient>
            <linearGradient id="gloss" gradientUnits="userSpaceOnUse" x1="0" y1="-200" x2="0" y2="200">
              <stop offset="0" stop-color="#5a6c68" /><stop offset=".35" stop-color="#83937f" /><stop offset=".7" stop-color="#6d7866" /><stop offset="1" stop-color="#55594c" />
            </linearGradient>
            <linearGradient id="face" x1="0" y1="0" x2="0" y2="1"><stop offset="0" stop-color="#687265" /><stop offset="1" stop-color="#6d7867" /></linearGradient>
            <clipPath id="bore"><ellipse rx="31" ry="75" transform="translate(808 541) rotate(-2)" /></clipPath>
            <clipPath id="bolt"><ellipse rx="11" ry="26" /></clipPath>
          </defs>
          <g stroke="#000" stroke-width="1.8">
            <path d="M852 201l48-1q18 0 34 12l-20 20zM876 874l44-1q20-3 34-14l-10-20z" fill="#2e2c28" />
            <ellipse rx="141.5" ry="336.5" transform="translate(910 536.5) rotate(-2.5)" fill="url(#rimBack)" />
            <ellipse rx="141.5" ry="334" transform="translate(896 537) rotate(-2.5)" fill="#6b7665" />
            <path d="M893 206l17 0-2 8-15-6z" fill="#403a35" />
            <path d="M935 248h27l6 11h-26z" fill="#48534b" /><path d="M949 259h18l-10 14z" fill="#403a35" />
            <path d="M984 343h24l4 17h-25z" fill="#48534b" /><path d="M989 361l21-1-15 6z" fill="#403a35" />
            <path d="M1010 460l24 12h-20z" fill="#47534f" /><path d="M1010 473h23l2 19h-22z" fill="#5a6153" />
            <path d="M1019 584l18 28h-18z" fill="#47534f" /><path d="M1015 613h23l-1 18h-21z" fill="#2e302b" stroke="none" /><path d="M1016 613h21M1015 631h21" />
            <path d="M1007 702l9 38h-18z" fill="#47534f" /><path d="M993 740h23l-4 14h-22z" fill="#4b4b47" />
            <path d="M974 806l1 26-17 0z" fill="#4b4b47" /><path d="M954 832h22l-9 9h-20z" fill="#35322d" />
            <g fill="#5b6557" stroke-width="2.2"><ellipse v-for="(d, i) in rimDrills" :key="i" :cx="d[0]" :cy="d[1]" rx="3" ry="6" /></g>
            <ellipse rx="141.5" ry="336.5" transform="translate(877 537) rotate(-2.5)" fill="url(#rimBack)" />
            <ellipse rx="141.5" ry="336.5" transform="translate(864 537.5) rotate(-2.5)" fill="url(#face)" />
            <g fill="#3c4439" stroke-width="2.4"><ellipse v-for="(d, i) in drills" :key="i" :cx="d[0]" :cy="d[1]" rx="2.5" ry="5.2" /></g>
            <path d="M815 328h45l30 30h-60zM828 752h50l12-30h-60z" fill="#3f4239" stroke="none" />
            <ellipse rx="92.5" ry="212" transform="translate(860 538.5) rotate(-2.2)" fill="url(#drum)" stroke="none" />
            <path d="M852 327a92.5 212 -2.2 0 1 16 423.500" fill="none" />
            <path d="M815 328h54" stroke-width="4" /><path d="M828 752h42" stroke-width="2" />
            <ellipse rx="92.5" ry="212" transform="translate(815.5 540) rotate(-2.2)" fill="url(#round)" />
            <ellipse rx="87" ry="205" transform="translate(812.5 540) rotate(-2.2)" fill="none" stroke="url(#gloss)" stroke-width="5" opacity=".7" />
            <ellipse rx="84" ry="199" transform="translate(808 541) rotate(-2.2)" fill="url(#face)" />
          </g>
          <g fill="none" stroke="#ff8412" stroke-width="2.2">
            <ellipse rx="92.5" ry="212" transform="translate(815.5 540) rotate(-2.2)" stroke-dasharray="13 6 4 6" />
            <path d="M801 342a84 199 -2.2 0 1 15 398" stroke-dasharray="14 7 4 7" />
            <path d="M801 342q-38 0-64 83M817 740q-34 0-60-48M822 330q-11 6-9 13" stroke-dasharray="14 4" />
            <path d="M747 400Q699 550 774 713" stroke="#96f069" stroke-dasharray="13 9 4 9" />
            <path d="M781 341q-18 8-33 48" stroke="#96f069" stroke-dasharray="12 8" />
          </g>
          <g clip-path="url(#bore)" stroke="#000" stroke-width="1.5">
            <path d="M770 460h75v165h-75z" fill="#3a3933" stroke="none" />
            <path d="M770 535h75v90h-75z" fill="#46504d" stroke="none" />
            <ellipse rx="30" ry="74" transform="translate(819 541) rotate(-2)" fill="#3e453e" />
            <path d="M794 510h28l7 100h-28z" fill="#525a4d" stroke="none" />
            <path d="M796 507h12l1 66h-12l-4-13q0-30 3-53zM797 560l12 13M795 485h14l3-12M802 595h11l2 18z" fill="#687263" />
            <path d="M821 470v70q0 35 7 65l20-20V490z" fill="#42426f" />
          </g>
          <ellipse rx="31" ry="75" transform="translate(808 541) rotate(-2)" fill="none" stroke="#000" stroke-width="2" />
          <g v-for="(b, i) in bolts" :key="'b' + i" :transform="`translate(${b.x} ${b.y}) rotate(-2)`">
            <g clip-path="url(#bolt)">
              <path d="M-12-27h24v54h-24z" fill="#45443b" /><path d="M-12 0h24v27h-24z" fill="#46504d" />
              <ellipse cx="12" rx="10" ry="23" :fill="b.open ? '#42426f' : '#4d5852'" stroke="#000" stroke-width="2" />
              <path d="M-9-12h8" stroke="#000" />
            </g>
            <ellipse rx="10.5" ry="25.5" fill="none" stroke="#000" stroke-width="3" />
          </g>
        </svg>

        <svg class="compass" viewBox="1570 160 180 150">
          <g stroke="#dcc8ff" stroke-width="2" fill="none" stroke-linejoin="round">
            <path d="M1585 293l-1-53 2-18q14-15 30-15 18 0 28 9 14 16 17 54l-2 6-11 15-16 1z" fill="#104e5c" />
            <path d="M1641 264l1-66q21 14 25 66z" fill="#00003e" />
            <path d="M1643 264l59-2q8 3 4 6-18 5-42 3z" fill="#104e5c" />
            <path d="M1643 215q20 12 18 56M1667 240l1 32M1616 256l38 14 14 3" />
            <path d="M1670 273h11l-5 6z" fill="#dcc8ff" />
          </g>
          <path d="M1611 250h11v12h-11z" fill="#d00000" />
          <g fill="#f5e600" font-family="Noto Sans, sans-serif" font-size="17"><text x="1656" y="184">y</text><text x="1712" y="246">x</text><text x="1688" y="262">z</text></g>
        </svg>
        <svg class="triad" viewBox="1715 910 50 60">
          <path d="M1724 929v31h30M1724 960l12 5 5-1" fill="none" stroke="#fff" />
          <g fill="#fff" font-family="Noto Sans, sans-serif" font-size="15"><text x="1723" y="928">y</text><text x="1753" y="960">x</text><text x="1736" y="966">z</text></g>
        </svg>
      </main>

      <aside class="side">
        <div v-for="(col, c) in sideBars" :key="c" class="col">
          <div v-for="(g, i) in col" :key="i" class="pile" :class="{ rule: g.rule }" :style="{ height: g.size + 'px' }">
            <button v-for="(tool, k) in g.tools" :key="k" class="tool" :class="{ off: tool.off, narrow: tool.narrow, arrow: tool.menu }" :aria-label="tool.label">
              <svg viewBox="0 0 30 30"><g class="art" v-html="icons[tool.icon]" /><path v-if="tool.menu" class="drop" d="M26 28h10l-5 5z" /></svg>
            </button>
          </div>
        </div>
      </aside>
    </div>

    <div class="bar lower" role="toolbar">
      <div v-for="(g, i) in bottomBar" :key="i" class="group" :style="{ width: g.size + 'px' }">
        <button v-for="(tool, k) in g.tools" :key="k" class="tool" :class="{ off: tool.off, arrow: tool.menu }" :aria-label="tool.label">
          <svg viewBox="0 0 30 30"><g class="art" v-html="icons[tool.icon]" /><path v-if="tool.boxed" d="M25 26h11v8H25z" fill="#fff" stroke="none" /><path v-if="tool.menu" class="drop" d="M25 28h10l-5 5z" /></svg>
        </button>
        <select v-if="g.select" class="box" aria-label="In work object"><option>{{ g.select }}</option></select>
      </div>
      <svg class="brand" viewBox="0 0 50 38">
        <g fill="none" stroke-width="3"><path d="M11 2q11-3 10 1-1 4-8 6 8 0 6 5" stroke="#e02a36" /><path d="M2 27q6 1 12-3 5-5 1-7-4-2-9 1M8 19L3 27" stroke="#52348f" /><path d="M30 12q-9-1-9 4 1 3 5 4 3 3-1 6l-7 1" stroke="#f59b14" /></g>
        <text x="8" y="38" font-family="Lato, sans-serif" font-size="12" font-weight="900" font-style="italic" fill="#52348f">CATIA</text>
      </svg>
    </div>

    <footer class="status">
      <span>Face/EdgeFillet.1/PartBody preselected</span>
      <input type="text" aria-label="Power input" />
      <button aria-label="Dialog"><svg viewBox="0 0 20 20"><path d="M3 3h9v9H3zM3 17h13V3M14 13v2" /></svg></button>
      <button aria-label="Information"><svg viewBox="0 0 20 20"><path d="M2 17V9l5-6h6l4 5v9zM9 7h2m-3 3h2v4m-2 0h4" /></svg></button>
    </footer>
  </div>
</template>

<style>
html, body { margin: 0; background: #d0d0e6; }
</style>
<style scoped>
.app { display: flex; flex-direction: column; min-height: 100vh; font: 14px/20px "Open Sans", "Noto Sans", sans-serif; color: #1c1c24; }
.app * { box-sizing: border-box; }
button { border: 0; padding: 0; background: none; font: inherit; color: inherit; }
svg { display: block; flex: none; overflow: visible; }
.title { display: flex; align-items: center; height: 29px; padding: 0 4px 0 2px; background: #0078d7; color: #fff; }
.title h1 { flex: 1; margin: 0 0 0 7px; font-size: 14px; font-weight: 400; }
.title button { display: flex; justify-content: center; width: 58px; }
.title button svg { width: 13px; height: 13px; fill: none; stroke: #fff; }
.title .small { width: 20px; height: 18px; }
.menu { display: flex; align-items: stretch; height: 24px; background: #d0d0e6; }
.menu .logo { width: 25px; height: 20px; margin: 2px 1px; }
.menu > button { padding: 0 16px 0 15px; white-space: nowrap; }
.menu > .hot { padding: 0 21px 0 8px; background: #ffe4b8; }
.menu > .wide { padding: 0 5px 0 8px; }
.menu u { text-underline-offset: 2px; }
.mdi { display: flex; gap: 3px; margin-left: auto; padding: 2px 0 1px; }
.mdi button { display: grid; place-items: center; width: 21px; background: #fff; }
.mdi svg { width: 14px; height: 14px; fill: none; stroke: #72849a; stroke-width: 1; }
.bar { display: flex; align-items: stretch; height: 47px; padding-left: 8px; border-bottom: 2px solid #6b6b76; background: linear-gradient(#fff 0, #f3f3fa 5px, #d9d9ea 12px, #d0d0e6 20px, #cbcbdf 33px, #9898ab 46px); }
.lower { height: 48px; }
.group { position: relative; display: flex; flex: none; align-items: center; padding: 2px 12px 0 11px; }
.lower .group { padding-top: 4px; }
.group::before { content: ""; position: absolute; left: 0; top: 5px; width: 3px; height: 20px; background: linear-gradient(90deg, #fff 2px, #9a9aa4 2px); }
.tool { display: flex; flex: none; width: 35px; height: 35px; padding: 3px; }
.tool svg { width: 30px; height: 30px; }
.group .arrow { width: 37px; }
.group .narrow { width: 28px; padding: 3px 0; }
.art { fill: none; stroke: #000; stroke-width: 1; }
.off .art { stroke: #9b9ba4; stroke-width: 1.5; filter: drop-shadow(1px 1px 0 #fff); }
.drop { fill: #000; stroke: none; }
.box {
  --mark: #000;
  appearance: none; flex: 1; height: 28px; padding: 0 4px;
  border: 2px solid; border-color: #777 #fff #fff #777; border-radius: 0;
  font: 14px/20px "Open Sans", sans-serif; color: #222; background-color: #fff; background-repeat: no-repeat;
  background-image: linear-gradient(45deg, transparent 50%, var(--mark) 50%), linear-gradient(-45deg, transparent 50%, var(--mark) 50%), linear-gradient(#ececec, #ececec), linear-gradient(#888, #888);
  background-position: right 10px top 10px, right 5px top 10px, right, right;
  background-size: 5px 5px, 5px 5px, 19px 100%, 20px 100%;
}
.dim { --mark: #888; opacity: 1; color: #808080; background-color: #ededed; }
.middle { display: flex; flex: 1; min-height: 902px; border-top: 2px solid #808086; }
.view { position: relative; display: flex; flex: 1; align-items: center; justify-content: center; overflow: hidden; border-left: 2px solid #77777c; background: linear-gradient(#333363 0, #3c3c6b 33%, #424270 47%, #474775 64%, #5c5a84 71%, #8584a3 87%, #acacbf 100%); }
.part { width: 380px; height: 740px; }
.tree { position: absolute; left: 0; top: 3px; color: #fff; font: 16px/26px "Noto Sans", sans-serif; }
.root { display: flex; align-items: center; gap: 4px; height: 36px; }
.root svg { width: 30px; height: 30px; }
.tree ul { margin: 0 0 0 9px; padding: 0; list-style: none; }
.tree li { position: relative; display: flex; align-items: center; gap: 3px; height: 36px; padding-left: 18px; }
.tree li::before { content: ""; position: absolute; left: 0; top: -8px; width: 18px; height: 26px; border-left: 2px solid #fff; border-bottom: 2px solid #fff; }
.tree li + li::before { top: -18px; height: 36px; }
.tree li > svg { width: 30px; height: 30px; }
.tree span { padding: 0 1px; }
.tree .body span { border-radius: 2px; background: #ff8000; }
.plus { position: absolute; left: -7px; top: 10px; z-index: 1; width: 16px; height: 16px; border-radius: 50%; background: #85858c; }
.compass { position: absolute; right: 23px; top: 58px; width: 180px; height: 150px; }
.triad { position: absolute; right: 8px; bottom: 33px; width: 50px; height: 60px; }
.side { display: flex; width: 147px; padding-left: 7px; background: linear-gradient(90deg, #fff 0, #f5f5fb 5px, #d0d0e6 14px, #d0d0e6 138px, #9e9eb2 147px); }
.col { flex: none; width: 50px; padding-top: 3px; }
.col:nth-child(2) { padding-top: 11px; }
.col:nth-child(3) { padding-top: 19px; }
.pile { position: relative; display: flex; flex-direction: column; padding-top: 10px; }
.pile::before { content: ""; position: absolute; left: 0; top: 0; width: 21px; height: 3px; background: linear-gradient(#fff 2px, #9a9aa4 2px); }
.rule { padding-top: 6px; }
.rule::before { width: 42px; }
.pile .arrow { height: 38px; }
.pile .narrow { height: 32px; padding: 1px 3px; }
.brand { width: 50px; height: 38px; margin: 3px 7px 0 auto; }
.status { display: flex; align-items: center; height: 29px; padding-left: 4px; }
.status span { flex: 1; }
.status input { width: 375px; height: 25px; border: 2px solid; border-color: #77777c #fff #fff #77777c; background: #fff; }
.status button { display: grid; place-items: center; width: 42px; height: 27px; border: 2px solid; border-color: #fff #85858e #85858e #fff; }
.status svg { width: 18px; height: 18px; fill: none; stroke: #a0a0a8; stroke-width: 2; }
</style>
